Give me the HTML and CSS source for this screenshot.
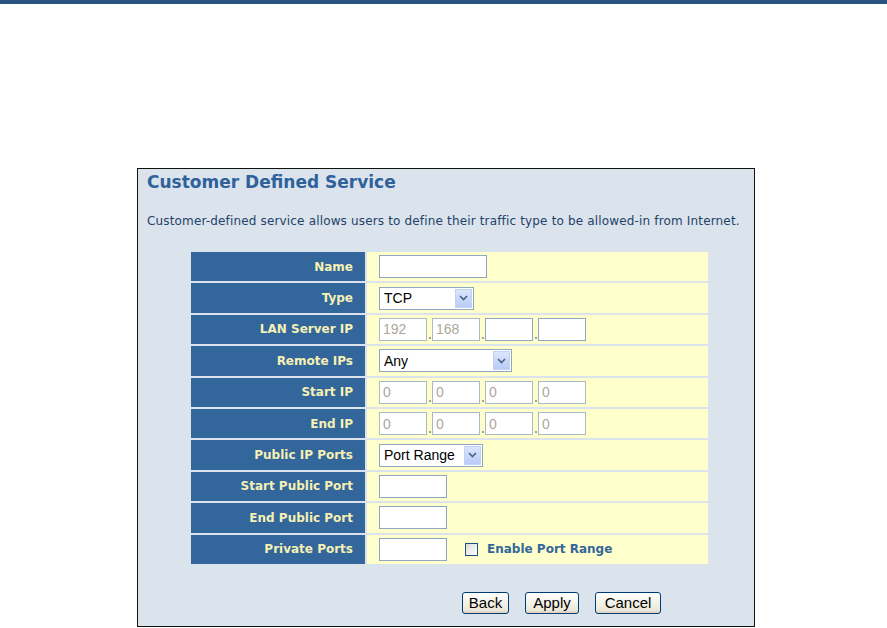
FILE: index.html
```html
<!DOCTYPE html>
<html>
<head>
<meta charset="utf-8">
<link rel="stylesheet" href="styles.css">
</head>
<body>
<div class="topbar"></div>
<div class="panel">
  <div class="title">Customer Defined Service</div>
  <div class="desc">Customer-defined service allows users to define their traffic type to be allowed-in from Internet.</div>
  <table class="form">
    <tr><th>Name</th><td><input class="txt name" type="text"></td></tr>
    <tr><th>Type</th><td><div class="sel w95"><span class="val">TCP</span><span class="arr"><svg width="9" height="6" viewBox="0 0 9 6"><path d="M1 1 L4.5 4.5 L8 1" fill="none" stroke="#4d6185" stroke-width="1.6"/></svg></span></div></td></tr>
    <tr><th>LAN Server IP</th><td><div class="ip"><input class="oct" type="text" value="192" disabled><span class="dot"></span><input class="oct" type="text" value="168" disabled><span class="dot"></span><input class="oct" type="text"><span class="dot"></span><input class="oct" type="text"></div></td></tr>
    <tr><th>Remote IPs</th><td><div class="sel w133"><span class="val">Any</span><span class="arr"><svg width="9" height="6" viewBox="0 0 9 6"><path d="M1 1 L4.5 4.5 L8 1" fill="none" stroke="#4d6185" stroke-width="1.6"/></svg></span></div></td></tr>
    <tr><th>Start IP</th><td><div class="ip"><input class="oct" type="text" value="0" disabled><span class="dot"></span><input class="oct" type="text" value="0" disabled><span class="dot"></span><input class="oct" type="text" value="0" disabled><span class="dot"></span><input class="oct" type="text" value="0" disabled></div></td></tr>
    <tr><th>End IP</th><td><div class="ip"><input class="oct" type="text" value="0" disabled><span class="dot"></span><input class="oct" type="text" value="0" disabled><span class="dot"></span><input class="oct" type="text" value="0" disabled><span class="dot"></span><input class="oct" type="text" value="0" disabled></div></td></tr>
    <tr><th>Public IP Ports</th><td><div class="sel w104"><span class="val">Port Range</span><span class="arr"><svg width="9" height="6" viewBox="0 0 9 6"><path d="M1 1 L4.5 4.5 L8 1" fill="none" stroke="#4d6185" stroke-width="1.6"/></svg></span></div></td></tr>
    <tr><th>Start Public Port</th><td><input class="txt port" type="text"></td></tr>
    <tr><th>End Public Port</th><td><input class="txt port" type="text"></td></tr>
    <tr><th>Private Ports</th><td><div class="pp"><input class="txt port" type="text"><span class="chk"></span><span class="chklbl">Enable Port Range</span></div></td></tr>
  </table>
  <div class="buttons">
    <button class="btn b-back">Back</button>
    <button class="btn b-apply">Apply</button>
    <button class="btn b-cancel">Cancel</button>
  </div>
</div>
</body>
</html>
```
FILE: styles.css
```css
html, body {
  margin: 0;
  padding: 0;
  background: #ffffff;
}
body {
  font-family: "DejaVu Sans", Verdana, sans-serif;
}
.topbar {
  height: 4px;
  background: #2a5580;
}
.panel {
  box-sizing: border-box;
  margin: 164px 0 0 137px;
  width: 618px;
  height: 459px;
  border: 1px solid #111;
  background: #dbe3ec;
  padding: 3px 0 0 9px;
}
.title {
  font-weight: bold;
  font-size: 17px;
  line-height: 20px;
  color: #2f619b;
}
.desc {
  margin-top: 21px;
  font-size: 12px;
  line-height: 16px;
  letter-spacing: 0.16px;
  color: #23426a;
  white-space: nowrap;
}
.form {
  margin: 21px 0 0 42px;
  border-collapse: separate;
  border-spacing: 2px;
}
.form tr {
  height: 29.4px;
}
.form th {
  box-sizing: border-box;
  width: 174px;
  background: #33669a;
  color: #f5f0b5;
  font-size: 12px;
  font-weight: bold;
  text-align: right;
  padding: 0 12px 0 0;
}
.form td {
  box-sizing: border-box;
  width: 341px;
  background: #ffffcc;
  padding: 0 0 0 12px;
  vertical-align: middle;
}
.txt, .oct {
  box-sizing: border-box;
  height: 23px;
  margin: 0;
  padding: 0 3px;
  border: 1px solid #8fa6bf;
  background: #fff;
  font-family: "Liberation Sans", Arial, sans-serif;
  font-size: 14px;
  color: #000;
  display: block;
  outline: none;
}
.name { width: 108px; }
.port { width: 68px; }
.ip {
  display: flex;
  align-items: flex-end;
}
.oct { width: 48px; }
.oct:disabled {
  color: #aca899;
  border-color: #a9bac9;
  background: #fff;
}
.dot {
  width: 5px;
  height: 4px;
  display: flex;
  justify-content: center;
  align-items: flex-start;
}
.dot::after {
  content: "";
  width: 2px;
  height: 2px;
  background: #a0a0a0;
}
.sel {
  box-sizing: border-box;
  height: 23px;
  border: 1px solid #8fa6bf;
  background: #fff;
  display: flex;
  align-items: center;
  font-family: "Liberation Sans", Arial, sans-serif;
  font-size: 14px;
  color: #000;
  padding: 1px;
}
.w95 { width: 95px; }
.w133 { width: 133px; }
.w104 { width: 104px; }
.sel .val {
  flex: 1;
  padding-left: 3px;
}
.sel .arr {
  box-sizing: border-box;
  width: 17px;
  height: 19px;
  background: linear-gradient(#dbe5fd, #b9cbf7);
  border: 1px solid #c4d2f2;
  display: flex;
  align-items: center;
  justify-content: center;
}
.pp {
  display: flex;
  align-items: center;
}
.chk {
  box-sizing: border-box;
  width: 13px;
  height: 13px;
  margin-left: 18px;
  border: 1px solid #1c5180;
  background: linear-gradient(135deg, #dcdcd6, #ffffff);
}
.chklbl {
  margin-left: 9px;
  font-size: 12px;
  font-weight: bold;
  color: #336699;
}
.buttons {
  display: flex;
  gap: 16px;
  margin: 26px 0 0 315px;
}
.btn {
  box-sizing: border-box;
  height: 22px;
  padding: 0;
  border: 1px solid #003c74;
  border-radius: 3px;
  background: linear-gradient(#ffffff, #ece9d8 85%, #d6d0c5);
  font-family: "Liberation Sans", Arial, sans-serif;
  font-size: 15px;
  color: #000;
}
.b-back { width: 47px; }
.b-apply { width: 54px; }
.b-cancel { width: 66px; }
```
